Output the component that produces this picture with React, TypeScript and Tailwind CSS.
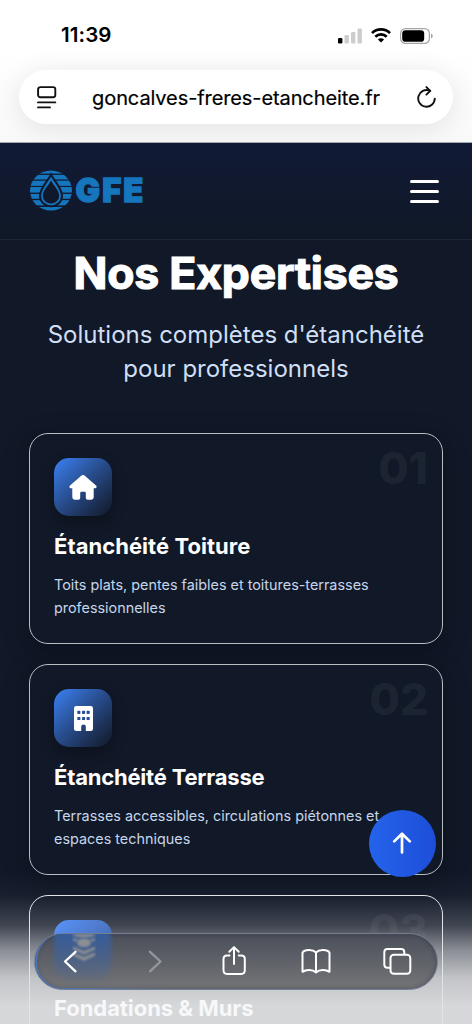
import type { ReactNode } from "react";

function HomeIcon() {
  return (
    <svg width="28" height="25" viewBox="0 0 28 25" fill="white">
      <path d="M12.5.5Q14 -.6 15.5.5L27 10.6Q28 11.6 27.3 12.7Q26.8 13.3 25.8 13.3H24.7V22.3Q24.7 24.7 22.3 24.7H18.6Q16.8 24.7 16.8 22.8V18Q16.8 16.8 15.6 16.8H12.4Q11.2 16.8 11.2 18V22.8Q11.2 24.7 9.4 24.7H5.7Q3.3 24.7 3.3 22.3V13.3H2.2Q1.2 13.3.7 12.7Q0 11.6 1 10.6Z" />
    </svg>
  );
}

function BuildingIcon() {
  return (
    <svg width="19" height="25" viewBox="0 0 19 25">
      <path
        fill="white"
        d="M2.3 0H16.7Q19 0 19 2.3V22.7Q19 25 16.7 25H11.8V20.6Q11.8 18.6 9.5 18.6Q7.2 18.6 7.2 20.6V25H2.3Q0 25 0 22.7V2.3Q0 0 2.3 0Z"
      />
      <g fill="#294f99">
        <rect x="3.3" y="4.8" width="3.1" height="3.1" rx=".6" />
        <rect x="8" y="4.8" width="3.1" height="3.1" rx=".6" />
        <rect x="12.6" y="4.8" width="3.1" height="3.1" rx=".6" />
        <rect x="3.3" y="11" width="3.1" height="3.1" rx=".6" />
        <rect x="8" y="11" width="3.1" height="3.1" rx=".6" />
        <rect x="12.6" y="11" width="3.1" height="3.1" rx=".6" />
      </g>
    </svg>
  );
}

type Card = {
  num: string;
  title: string;
  text: string;
  icon: ReactNode;
  box: string;
  tile: string;
  numColor: string;
  titleStyle: string;
};

const cards: Card[] = [
  {
    num: "01",
    title: "Étanchéité Toiture",
    text: "Toits plats, pentes faibles et toitures-terrasses professionnelles",
    icon: <HomeIcon />,
    box: "border-[#b9bdc4] bg-[#111827] shadow-[0_6px_24px_rgba(6,10,18,0.4)]",
    tile: "from-[#3b82f6] to-[#111827] shadow-[0_5px_14px_rgba(0,0,0,0.3)]",
    numColor: "text-[#1c2431]",
    titleStyle: "text-white tracking-[0.05px]",
  },
  {
    num: "02",
    title: "Étanchéité Terrasse",
    text: "Terrasses accessibles, circulations piétonnes et espaces techniques",
    icon: <BuildingIcon />,
    box: "border-[#b9bdc4] bg-[#111827] shadow-[0_6px_24px_rgba(6,10,18,0.4)]",
    tile: "from-[#3b82f6] to-[#111827] shadow-[0_5px_14px_rgba(0,0,0,0.3)]",
    numColor: "text-[#1c2431]",
    titleStyle: "text-white tracking-[-0.2px]",
  },
  {
    num: "03",
    title: "Fondations & Murs",
    text: "",
    icon: null,
    box: "z-10 border-[#e3e4e7]",
    tile: "from-[#5a94fa] to-[#3f5c94]",
    numColor: "text-[#8a8d96]/12",
    titleStyle: "text-[#f7f8f9] tracking-[-0.05px]",
  },
];

function Logo() {
  return (
    <svg width="116" height="42" viewBox="0 0 116 42">
      <defs>
        <clipPath id="disc">
          <ellipse cx="22" cy="20.6" rx="21" ry="20" />
        </clipPath>
      </defs>
      <g clipPath="url(#disc)" fill="#1575bd">
        <rect y="0" width="44" height="3.6" />
        <rect y="4.9" width="44" height="4.6" />
        <rect y="10.7" width="44" height="5.2" />
        <rect y="17" width="44" height="5.6" />
        <rect y="23.9" width="44" height="4.9" />
        <rect y="30.1" width="44" height="5.3" />
        <rect y="37" width="44" height="5" />
      </g>
      <path
        d="M22 4.6C19 11 11 18 11 26A11 10.2 0 0 0 33 26C33 18 25 11 22 4.6Z"
        fill="#1575bd"
        stroke="#10182c"
        strokeWidth="2"
      />
      <path d="M22 10.6C19.8 15.6 13.8 20 13.8 26A8.2 7.4 0 0 0 30.2 26C30.2 20 24.2 15.6 22 10.6Z" fill="#10182c" />
      <text
        x="46.6"
        y="31.6"
        textLength="67.5"
        lengthAdjust="spacing"
        fill="#1575bd"
        stroke="#1575bd"
        strokeWidth="1.4"
        fontFamily="Inter"
        fontWeight="900"
        fontSize="32.5"
      >
        GFE
      </text>
    </svg>
  );
}

function BrowserTop() {
  return (
    <div className="h-[143px] shrink-0 overflow-hidden border-b border-[#a5a8b5] bg-linear-to-b from-white from-35% to-[#f9f9fa]">
      {/* Status bar */}
      <div className="flex h-[70px] items-center justify-between pt-px pr-[39px] pl-[61px]">
        <span className="text-[20.5px] font-semibold tracking-[0.1px] text-black">11:39</span>
        <div className="flex items-center">
          <svg width="25" height="16" viewBox="0 0 25 16">
            <rect x="0" y="10" width="4.4" height="5.5" rx="1.2" fill="#000" />
            <rect x="6.5" y="7" width="4.4" height="8.5" rx="1.2" fill="#cdcdcd" />
            <rect x="13" y="4" width="4.4" height="11.5" rx="1.2" fill="#cdcdcd" />
            <rect x="19.5" y="0.5" width="4.4" height="15" rx="1.2" fill="#cdcdcd" />
          </svg>
          <svg className="ml-[8px]" width="20" height="15" viewBox="0 0 20 15" fill="none" stroke="#000" strokeWidth="2.7">
            <path d="M1 5.1A12.8 12.8 0 0 1 19 5.1" />
            <path d="M4.3 8.7A8.2 8.2 0 0 1 15.7 8.7" />
            <path d="M10 14.6L6.9 11.5A4.4 4.4 0 0 1 13.1 11.5Z" fill="#000" stroke="none" />
          </svg>
          <svg className="ml-[9px]" width="33" height="16" viewBox="0 0 33 16">
            <rect x=".6" y=".6" width="28.8" height="14.8" rx="4.8" fill="none" stroke="#a6a6a6" strokeWidth="1.2" />
            <rect x="2.2" y="2.2" width="22" height="11.6" rx="3.4" fill="#000" />
            <path d="M31 5.6Q32.8 6.4 32.8 8T31 10.4Z" fill="#a6a6a6" />
          </svg>
        </div>
      </div>
      {/* Address bar */}
      <div className="mx-[19px] flex h-[54px] items-center justify-between rounded-full bg-white pr-[16px] pl-[18px] shadow-[0_4px_28px_rgba(0,0,0,0.1)]">
        <svg width="20" height="23" viewBox="0 0 20 23" fill="none" stroke="#111" strokeWidth="1.9" strokeLinecap="round">
          <rect x="1.1" y="1.1" width="17.2" height="10.2" rx="2.2" />
          <path d="M1 16.4H18.3M1 21.4H13" />
        </svg>
        <span className="relative -left-px pt-px text-[20px] tracking-[-0.1px] whitespace-nowrap text-black [-webkit-text-stroke:0.2px_black]">
          goncalves-freres-etancheite.fr
        </span>
        <svg width="20" height="23" viewBox="0 0 20 23" fill="none" stroke="#111" strokeWidth="1.9" strokeLinecap="round" strokeLinejoin="round">
          <path d="M12.6 4.7A8.3 8.3 0 1 0 17.8 12.6" />
          <path d="M9.4 1.1L13.3 4.9L9.4 8.6" />
        </svg>
      </div>
    </div>
  );
}

function BrowserBottom() {
  return (
    <nav className="absolute top-[933px] left-[34px] z-20 h-[57px] w-[404px] overflow-hidden rounded-full border border-[#737e94] bg-linear-to-b from-[#4b4f5a] to-[#747578] shadow-[inset_0_0_5px_rgba(25,30,42,0.4)]">
      {/* Content seen through the glass */}
      <div className="absolute -top-3 left-[19px] h-[58px] w-[57px] rounded-2xl bg-linear-to-b from-[#315fa9] to-[#596b8b]/30 blur-[2px]" />
      <div className="absolute inset-0 rounded-full border-b border-l-2 border-[#4d76b8] mask-r-from-5% mask-r-to-35%" />
      <svg className="absolute top-0 left-[36px] blur-[1px]" width="26" height="28" viewBox="0 0 26 28" fill="#8c8e92">
        <path d="M2 0H24V1.5L18 3.2H8L2 1.5Z" />
        <path d="M2 4L8 5.5L3 8ZM24 4L18 5.5L23 8Z" />
        <ellipse cx="13" cy="8.8" rx="7" ry="4.4" />
        <path d="M2 12.5L13 17L24 12.5V15.5L13 20.5L2 15.5ZM2 18.5L13 23L24 18.5V21.5L13 27L2 21.5Z" />
      </svg>
      <svg
        className="absolute inset-0"
        width="402"
        height="55"
        viewBox="0 0 402 55"
        fill="none"
        stroke="white"
        strokeWidth="2.3"
        strokeLinecap="round"
        strokeLinejoin="round"
      >
        <path d="M40.5 17.8L30 27.5L40.5 37.3" />
        <path d="M115 17.8L125.5 27.5L115 37.3" stroke="#94979e" />
        <g strokeWidth="2">
          <path d="M194.5 21.5H192Q188.5 21.5 188.5 25V36.3Q188.5 39.9 192 39.9H206.3Q209.8 39.9 209.8 36.3V25Q209.8 21.5 206.3 21.5H203.8" />
          <path d="M199 30V13.5M194.3 17.8L199 13.1L203.7 17.8" />
          <path d="M281 18.5C278 15.5 270 15 267.5 18.5V37.8C271 35.5 277.5 35.4 281 38.4C284.5 35.4 291 35.5 294.5 37.8V18.5C292 15 284 15.5 281 18.5V38.2" />
          <rect x="355.5" y="20.7" width="19.8" height="19.1" rx="3.3" />
          <path d="M355.3 33.8H352.5Q349.3 33.8 349.3 30.6V18.2Q349.3 15 352.5 15H366.1Q369.3 15 369.3 18.2V20" />
        </g>
      </svg>
    </nav>
  );
}

export default function App() {
  return (
    <div className="relative flex h-[1024px] w-[472px] flex-col overflow-hidden bg-[#111827] font-['Inter',sans-serif]">
      <BrowserTop />

      <header className="flex h-[97px] shrink-0 items-center justify-between border-b border-[#1e2738] bg-linear-to-b from-[#111a35] to-[#101827] pr-[33px] pl-[29px]">
        <Logo />
        <div className="flex flex-col gap-[7px]">
          <span className="h-[3px] w-[29px] rounded-full bg-white" />
          <span className="h-[3px] w-[29px] rounded-full bg-white" />
          <span className="h-[3px] w-[29px] rounded-full bg-white" />
        </div>
      </header>

      <main className="flex flex-col px-[29px]">
        <h2 className="mt-[7px] text-center text-[44.5px] leading-[52px] font-bold tracking-[-0.2px] whitespace-nowrap text-white [-webkit-text-stroke:1.2px_white]">
          Nos Expertises
        </h2>
        <p className="mt-[19px] text-center text-[24px] leading-[34px] whitespace-nowrap text-[#cfdff5]">
          Solutions complètes d'étanchéité
          <br />
          pour professionnels
        </p>

        <div className="mt-[47px] flex flex-col gap-[20px]">
          {cards.map((card) => (
            <article
              key={card.num}
              className={`relative h-[211px] shrink-0 rounded-[19px] border p-[24px] ${card.box}`}
            >
              <span
                className={`absolute top-[8px] right-[14px] text-[44px] leading-[52px] font-extrabold ${card.numColor}`}
              >
                {card.num}
              </span>
              <div className={`flex h-[58px] w-[58px] items-center justify-center rounded-[15px] bg-linear-to-br ${card.tile}`}>
                {card.icon}
              </div>
              <h3 className={`mt-[15px] text-[22px] leading-[30px] font-bold whitespace-nowrap ${card.titleStyle}`}>
                {card.title}
              </h3>
              <p className="mt-[12px] w-[340px] text-[14.4px] leading-[23px] text-[#c5d5ea]">{card.text}</p>
            </article>
          ))}
        </div>
      </main>

      {/* Fade behind the browser toolbar */}
      <div className="absolute inset-x-0 bottom-0 h-[154px] bg-[linear-gradient(180deg,rgba(218,219,221,0)_0%,rgba(218,219,221,0.03)_16%,rgba(218,219,221,0.23)_36%,rgba(218,219,221,0.6)_52%,rgba(218,219,221,0.88)_70%,rgba(218,219,221,0.98)_88%,rgba(218,219,221,0.98)_100%)]" />

      {/* Back to top */}
      <button className="absolute top-[810px] left-[369px] flex h-[67px] w-[67px] items-center justify-center rounded-full bg-linear-to-r from-[#2563eb] to-[#1d4ed8]">
        <svg className="relative -top-px -left-px" width="20" height="22" viewBox="0 0 20 22" fill="none" stroke="white" strokeWidth="2.7" strokeLinecap="round" strokeLinejoin="round">
          <path d="M10 20.5V2M2.2 9.4L10 1.7L17.8 9.4" />
        </svg>
      </button>

      <BrowserBottom />
    </div>
  );
}
